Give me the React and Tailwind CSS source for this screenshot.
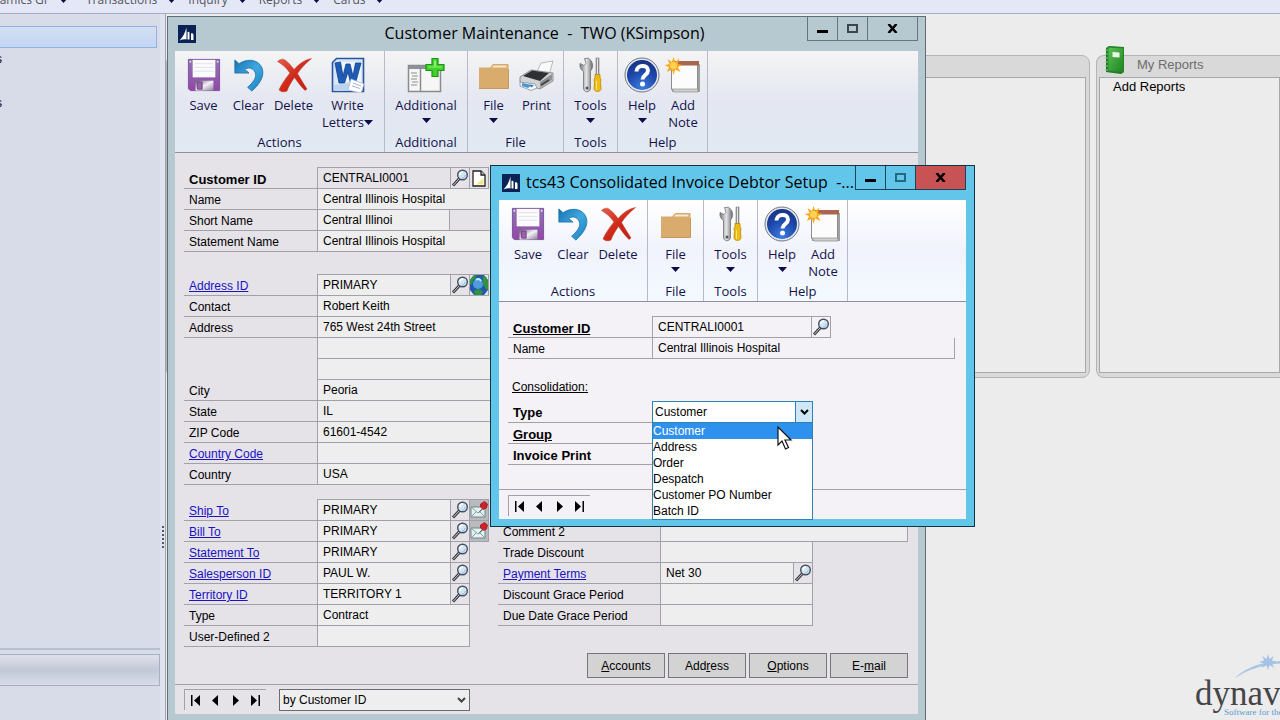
import { useState } from 'react'

const sans = "font-['Liberation_Sans',Arial,sans-serif]"
const ui = "font-['Open_Sans','Noto_Sans',sans-serif]"

function Gradients() {
  return (
    <svg width="0" height="0" className="absolute" aria-hidden="true">
      <defs>
        <linearGradient id="purple" x1="0" y1="0" x2="0" y2="1">
          <stop offset="0" stopColor="#8d76b4" />
          <stop offset="1" stopColor="#9446a8" />
        </linearGradient>
        <linearGradient id="metal" x1="0" y1="0" x2="1" y2="1">
          <stop offset="0" stopColor="#6b6178" />
          <stop offset="0.5" stopColor="#f2f2f6" />
          <stop offset="1" stopColor="#8b8298" />
        </linearGradient>
        <linearGradient id="blueArrow" x1="0" y1="0" x2="1" y2="1">
          <stop offset="0" stopColor="#1672b4" />
          <stop offset="0.5" stopColor="#3fa9de" />
          <stop offset="1" stopColor="#1b7dc0" />
        </linearGradient>
        <linearGradient id="red" x1="0" y1="0" x2="1" y2="1">
          <stop offset="0" stopColor="#e2604c" />
          <stop offset="0.5" stopColor="#cf2a1a" />
          <stop offset="1" stopColor="#b81d12" />
        </linearGradient>
        <radialGradient id="helpBlue" cx="0.5" cy="0.9" r="0.9">
          <stop offset="0" stopColor="#3b7be0" />
          <stop offset="0.6" stopColor="#1d45a8" />
          <stop offset="1" stopColor="#173384" />
        </radialGradient>
        <linearGradient id="steel" x1="0" y1="0" x2="1" y2="0">
          <stop offset="0" stopColor="#77777c" />
          <stop offset="0.5" stopColor="#e6e6e8" />
          <stop offset="1" stopColor="#6a6a6e" />
        </linearGradient>
        <linearGradient id="book" x1="0" y1="0" x2="1" y2="1">
          <stop offset="0" stopColor="#5cc455" />
          <stop offset="1" stopColor="#1d8221" />
        </linearGradient>
      </defs>
    </svg>
  )
}

function SaveIcon() {
  return (
    <svg width="34" height="34" viewBox="0 0 36 36">
      <path d="M1.500 1.500h33v33h-31l-2-2z" fill="url(#purple)" stroke="#7d4f97" />
      <path d="M6 2h24v18.500H6z" fill="#fbfbfd" />
      <path d="M8 6h20M8 10h20M8 14h20" stroke="#dfe2ea" />
      <circle cx="3.500" cy="4" r="1" fill="#e9e0f2" />
      <circle cx="32.500" cy="4" r="1" fill="#e9e0f2" />
      <path d="M9 24h19v10.500H9z" fill="url(#metal)" />
      <path d="M11 25.500h5v7.500h-5z" fill="#a25cb8" stroke="#64486f" />
    </svg>
  )
}

function ClearIcon() {
  return (
    <svg width="34" height="36" viewBox="0 0 36 36">
      <path
        d="M3 2l4.500 4C15 1 25 1 30 7.500c6 8 1.500 18.500-9 27.500l-4.500-4c7-6 11-12 7-17.500-2.500-3.500-7-3.500-10-1.500l4.500 4H3z"
        fill="url(#blueArrow)"
        stroke="#176aa6"
        strokeWidth="0.800"
      />
    </svg>
  )
}

function DeleteIcon() {
  return (
    <svg width="38" height="36" viewBox="0 0 38 36">
      <path
        d="M2.500 4.500C5 2 8 1.500 10 3c4 3 6.500 6 9 9.500C24 7 29 3 36.500 1.500 31 6 26.500 10.500 22.500 16.500c3 5 6 10 9.500 15.500l-2 1.500c-4-4-7.500-8.500-10.500-13-3.500 5-6 9-7.500 13.500-3 1.500-5.500 1-8-1 2-5 6-11 11-17C11.500 11 7 7 2.500 4.500z"
        fill="url(#red)"
        stroke="#c43a2b"
        strokeWidth="0.500"
      />
    </svg>
  )
}

function WordIcon() {
  return (
    <svg width="36" height="36" viewBox="0 0 36 36">
      <path d="M6.500 1.500h27v33h-31v-29z" fill="#d6e7f8" stroke="#28549c" strokeWidth="1.600" />
      <path d="M7 5h24v20H7z" fill="#eef6fd" />
      <path d="M5 6l5.500-1 2.500 14 3-12h4l3 12 2.500-13H31l-5.500 20h-5L18 15l-3.500 11H9z" fill="#1f5cb5" stroke="#123f8b" strokeWidth="0.800" />
      <path d="M4 28l16-2v8H4z" fill="#bcd4ee" />
      <path d="M21 22l13 5-3 9-13-3z" fill="#fff" stroke="#a9b8cc" strokeWidth="0.700" />
      <path d="M23 26l8 3M22 29l8 2.500" stroke="#9db5d4" />
    </svg>
  )
}

function AdditionalIcon() {
  return (
    <svg width="38" height="36" viewBox="0 0 38 36">
      <path d="M1.500 8.500h32v26h-32z" fill="#f6f6f6" stroke="#8b8b8b" strokeWidth="1.500" />
      <path d="M2 9h31v3H2z" fill="#8d909b" />
      <path d="M13.500 12v22" stroke="#8b8b8b" strokeWidth="1.500" />
      <path d="M4 16h6M5 19h6M4 22h6M5 25h6M4 28h6" stroke="#8d8d8d" />
      <path d="M25 1.500h6v6h6v6h-6v6h-6v-6h-6v-6h6z" fill="#42d02b" stroke="#1d9418" strokeWidth="1.200" />
      <path d="M27 3.500h2v6h6v1H21v-1h6z" fill="#8cf072" />
    </svg>
  )
}

function FileIcon() {
  return (
    <svg width="36" height="36" viewBox="0 0 36 36">
      <path d="M3 10.500h11l3-3.500h15.500v24.500H3z" fill="#d9ab6c" />
      <path d="M17.500 8.500h13v2h-14.500z" fill="#f5e9d4" />
      <path d="M3 31.500h29.500V12" stroke="#c6985a" fill="none" />
    </svg>
  )
}

function PrintIcon() {
  return (
    <svg width="38" height="36" viewBox="0 0 38 36">
      <path d="M19 15l4-9 12-2-4 14z" fill="#fafafa" stroke="#a8a8a8" strokeWidth="0.800" />
      <path d="M2 20l11-7 22 3v8l-13 8-20-7z" fill="#d1d2d4" stroke="#77787a" strokeWidth="0.800" />
      <path d="M5 19l9-5.500 17 2.500-9 8z" fill="#2e3033" />
      <path d="M22 25l12-8v6l-12 8z" fill="#8e9092" />
      <path d="M23 28l8-5" stroke="#434446" strokeWidth="1.500" />
      <path d="M2 25l15 2 2 4-6 2.500L2 29z" fill="#f4f8fb" stroke="#8b9094" strokeWidth="0.800" />
      <path d="M4 26l10 2-4 3-6-2z" fill="#4398d4" />
      <path d="M12 27.500l4 1-3 2z" fill="#3b68b8" />
    </svg>
  )
}

function ToolsIcon() {
  return (
    <svg width="24" height="36" viewBox="0 0 24 36">
      <path
        d="M5.500 1.500l1.500 5-2 2-4-2c-.5 4 1 6.500 3.500 8V31c0 5 7 5 7 0V14c3-3 3-8.500-1-12l-1-.8z"
        fill="url(#steel)"
        stroke="#717175"
        strokeWidth="0.800"
      />
      <circle cx="8" cy="31" r="1.500" fill="#55565a" />
      <path d="M17 1h3v17h-3z" fill="url(#steel)" stroke="#77777b" strokeWidth="0.600" />
      <path d="M16 17.500h5v3l1 2-.5 3 .5 6c0 4-7 4-7 0l.5-6-.5-3 1-2z" fill="#f0bb12" stroke="#b88605" strokeWidth="0.800" />
      <path d="M17.500 24v9" stroke="#ffe678" />
    </svg>
  )
}

function HelpIcon() {
  return (
    <svg width="36" height="36" viewBox="0 0 36 36">
      <circle cx="18" cy="18" r="17" fill="#e4e8f0" stroke="#70757f" />
      <circle cx="18" cy="18" r="15" fill="url(#helpBlue)" />
      <path d="M12.500 14.500c0-7 11.500-7.500 11.500-1 0 4.500-5.500 4.500-5.500 9" fill="none" stroke="#fff" strokeWidth="4" />
      <circle cx="18.500" cy="27" r="2.500" fill="#fff" />
    </svg>
  )
}

function NoteIcon() {
  return (
    <svg width="36" height="36" viewBox="0 0 36 36">
      <path d="M7 7h28v28H7z" fill="#a0a0a0" />
      <path d="M6.500 6.500h26v26h-26z" fill="#fcfcfc" stroke="#8d8d8d" />
      <path d="M7 4h27v4.500H7z" fill="#a7664f" />
      <path d="M9 35l-2-3h26v3z" fill="#cfcfcf" stroke="#8d8d8d" strokeWidth="0.700" />
      <path
        d="M8.500 0l1.700 5 4.300-3.500-1.700 5.500 5 1-5 2 2.700 5-5.300-2.500L8.500 18l-1.500-5.500-5 2.500 2-5-4.500-2 5-1L2.500 2l4.500 3z"
        fill="#f9a91b"
      />
      <circle cx="8.500" cy="8.500" r="3.500" fill="#ffd257" />
    </svg>
  )
}

function Logo() {
  return (
    <svg width="18" height="18" viewBox="0 0 18 18" className="shrink-0">
      <path d="M0 0h18v18H0z" fill="#0b2257" />
      <path d="M1.500 15.500C5 12 7 8 8.500 2.500v12c-2-.5-4.500 0-7 1z" fill="#fff" />
      <path d="M9.500 7c1.500-.8 2 0 2 1.500v6h-2zM13 8.500c1.500-.8 2.500 0 2.500 1.500v5H13z" fill="#fff" />
    </svg>
  )
}

function LookupIcon() {
  return (
    <svg width="18" height="18" viewBox="0 0 18 18">
      <path d="M8.500 9.500l-6.500 7" stroke="#3a3a42" strokeWidth="3" />
      <path d="M8 10l-5.500 6" stroke="#c9ccd4" />
      <circle cx="11.500" cy="6" r="4.800" fill="#cfe6f8" stroke="#4a4c58" strokeWidth="1.400" />
      <path d="M9 6c0-2 1-3 3-3" stroke="#fff" strokeWidth="1.500" fill="none" />
      <path d="M14 6c0 2-1 3-3 3" stroke="#8dbbe2" fill="none" />
    </svg>
  )
}

function PageIcon() {
  return (
    <svg width="18" height="18" viewBox="0 0 18 18">
      <path d="M3 2h8l4 4v11H3z" fill="#fff" stroke="#222" strokeWidth="1.300" />
      <path d="M11 2v4h4" fill="#ccc" stroke="#222" strokeWidth="1.300" />
      <path d="M13.500 9v6.500H6z" fill="#eeea86" />
    </svg>
  )
}

function GlobeIcon() {
  return (
    <svg width="18" height="20" viewBox="0 0 18 20">
      <path d="M4 0h10l4 5v10l-4 5H4l-4-5V5z" fill="#2458ae" />
      <circle cx="8" cy="9" r="5" fill="#4f9be0" />
      <path d="M0 5c2-3 3-5 6-5 1 3-2 4-3 6s-1 3-3 4zM12 1l4 1 2 4v8l-2 1c0-3-2-3-3-6s1-5-1-8zM4 16c3-3 7-2 9 1l-2 3H5z" fill="#2f9340" />
      <path d="M6 5c2-2 4-1 5 1" stroke="#c3ecf8" strokeWidth="2" fill="none" />
    </svg>
  )
}

function MailIcon() {
  return (
    <svg width="18" height="18" viewBox="0 0 18 18">
      <path d="M1 6h14v10H1z" fill="#e4f1f1" stroke="#6f8587" />
      <path d="M1 6l7 6 7-6M1 16l5-5M15 16l-5-5" fill="none" stroke="#7fa3a5" />
      <path d="M10.500 3l4-2.500L17.500 3l-1 4-3 1.500-3-2.500z" fill="#d0212b" stroke="#8e1017" strokeWidth="0.700" />
      <path d="M12 8l-3 3.500" stroke="#555" />
    </svg>
  )
}

const rowIcons = { lookup: LookupIcon, page: PageIcon, globe: GlobeIcon, mail: MailIcon }

function RowButton({ kind, first }) {
  const Icon = rowIcons[kind]
  return (
    <button
      aria-label={kind}
      className={`flex w-[19px] shrink-0 items-center justify-center overflow-hidden border-r border-[#a2a0a8] ${first ? 'border-t' : ''} ${kind === 'mail' ? 'bg-[#b9b9be]' : ''}`}
    >
      <Icon />
    </button>
  )
}

function Caption({ id, text, link, bold, underline }) {
  if (link) return <a href="#lookup" className="text-[#1a12c4] underline">{text}</a>
  return (
    <label htmlFor={id} className={`${bold ? 'text-[13px] font-bold' : ''} ${underline ? 'underline' : ''}`}>
      {text}
    </label>
  )
}

function Row({ id, label, link, bold, underline, value = '', buttons = [], first, labelWidth, width = 'w-full', fill = 'bg-[#eeeeee]', tail, open }) {
  // blank captions continue the field above, so they carry no rule under the label
  const rule = label ? 'border-b border-[#a2a0a8]' : ''
  return (
    <div className={`flex ${first ? 'h-[22px]' : 'h-[21px]'} ${width}`}>
      <div className={`flex shrink-0 items-end pl-[5px] leading-[17px] ${rule} ${labelWidth}`}>
        <Caption id={id} text={label} link={link} bold={bold} underline={underline} />
      </div>
      <div className="flex min-w-0 flex-1 border-b border-[#a2a0a8]">
        <input
          id={id}
          aria-label={label || 'Address line'}
          defaultValue={value}
          className={`min-w-0 flex-1 border-l border-[#a2a0a8] pl-[5px] outline-none ${open ? '' : 'border-r'} ${first ? 'border-t' : ''} ${fill}`}
        />
        {buttons.map(kind => <RowButton key={kind} kind={kind} first={first} />)}
        {tail && <div className="w-10 shrink-0" />}
      </div>
    </div>
  )
}

const iconMap = {
  Save: SaveIcon, Clear: ClearIcon, Delete: DeleteIcon, 'Write Letters': WordIcon, Additional: AdditionalIcon,
  File: FileIcon, Print: PrintIcon, Tools: ToolsIcon, Help: HelpIcon, 'Add Note': NoteIcon,
}

function Arrow() {
  return (
    <svg width="9" height="5" viewBox="0 0 9 5" className="inline-block shrink-0">
      <path d="M0 0h9L4.500 5z" fill="#0d0b4a" />
    </svg>
  )
}

function RibbonButton({ name, menu, width }) {
  const Icon = iconMap[name]
  const [top, second] = name.split(' ')
  return (
    <button className={`flex flex-col items-center ${width}`}>
      <span className="flex h-9 items-center"><Icon /></span>
      <span className="mt-1 block leading-[17px]">{top}</span>
      <span className={`flex h-[17px] items-center leading-[17px] ${second ? '' : 'pb-1'}`}>
        {second}
        {menu && <Arrow />}
      </span>
    </button>
  )
}

function RibbonGroup({ title, width, children }) {
  return (
    <section className={`flex shrink-0 flex-col border-r border-[#b7bac8] ${width}`}>
      <div className="flex flex-1 justify-center pt-1.5">{children}</div>
      <div className="pb-px text-center leading-[18px]">{title}</div>
    </section>
  )
}

function Ribbon({ className, children }) {
  return (
    <div className={`flex h-[102px] border-b border-[#8d909c] text-[13px] text-[#14124a] ${ui} ${className}`}>
      {children}
    </div>
  )
}

function TitleBar({ title, active }) {
  const edge = active ? 'border-[#1d4252]' : 'border-[#66757c]'
  return (
    <header className={`flex h-[34px] ${ui}`}>
      <div className="flex min-w-0 flex-1 items-center gap-1.5 pl-[3px]">
        <Logo />
        <h2 className={`min-w-0 flex-1 overflow-hidden whitespace-pre text-[16px] text-black ${active ? '' : 'pl-[90px] text-center'}`}>
          {title}
        </h2>
      </div>
      <div className={`flex h-6 shrink-0 border-b border-l ${edge} ${active ? 'ml-0' : 'ml-[10px]'}`}>
        <button aria-label="Minimize" className={`flex w-[30px] items-center justify-center border-r ${edge}`}>
          <span className="mt-1.5 h-[3px] w-[11px] bg-black" />
        </button>
        <button aria-label="Maximize" className={`flex w-[30px] items-center justify-center border-r ${edge}`}>
          <span className={`h-[9px] w-[11px] border-2 ${active ? 'border-[#24697f]' : 'border-[#3c474c]'}`} />
        </button>
        <button aria-label="Close" className={`flex w-[50px] items-center justify-center border-r ${edge} ${active ? 'bg-[#c75355]' : ''}`}>
          <svg width="11" height="9" viewBox="0 0 11 9">
            <path d="M1.500 0l8 9M9.500 0l-8 9" stroke="#000" strokeWidth="2.500" />
          </svg>
        </button>
      </div>
    </header>
  )
}

const navSteps = [
  ['First record', 'M1 0h1.500v11H1zM10 0v11L4 5.500z'],
  ['Previous record', 'M8 0v11L2 5.500z'],
  ['Next record', 'M3 0v11l6-5.500z'],
  ['Last record', 'M1 0v11l6-5.500zM8.500 0H10v11H8.500z'],
]

function RecordNav() {
  return (
    <nav className="flex h-[21px] w-[82px] shrink-0 border-l border-t border-[#a2a0a8]">
      {navSteps.map(([name, d]) => (
        <button key={name} aria-label={name} className="flex flex-1 items-center justify-center">
          <svg width="11" height="11" viewBox="0 0 11 11"><path d={d} fill="#000" /></svg>
        </button>
      ))}
    </nav>
  )
}

const menus = ['Transactions', 'Inquiry', 'Reports', 'Cards']
const nameRows = [
  { label: 'Customer ID', value: 'CENTRALI0001', bold: true, first: true, buttons: ['lookup', 'page'], fill: 'bg-[#e5e2e8]', width: 'w-[305px]' },
  { label: 'Name', value: 'Central Illinois Hospital', open: true },
  { label: 'Short Name', value: 'Central Illinoi', tail: true },
  { label: 'Statement Name', value: 'Central Illinois Hospital', open: true },
]
const addressRows = [
  { label: 'Address ID', value: 'PRIMARY', link: true, first: true, buttons: ['lookup', 'globe'], width: 'w-[305px]' },
  { label: 'Contact', value: 'Robert Keith', open: true },
  { label: 'Address', value: '765 West 24th Street', open: true },
  { label: '', open: true },
  { label: '', open: true },
  { label: 'City', value: 'Peoria', open: true },
  { label: 'State', value: 'IL', open: true },
  { label: 'ZIP Code', value: '61601-4542', open: true },
  { label: 'Country Code', link: true, open: true },
  { label: 'Country', value: 'USA', open: true },
]
const wide = 'w-[305px]'
const short = 'w-[286px]'
const billingRows = [
  { label: 'Ship To', value: 'PRIMARY', link: true, first: true, buttons: ['lookup', 'mail'], width: wide },
  { label: 'Bill To', value: 'PRIMARY', link: true, buttons: ['lookup', 'mail'], width: wide },
  { label: 'Statement To', value: 'PRIMARY', link: true, buttons: ['lookup'], width: short },
  { label: 'Salesperson ID', value: 'PAUL W.', link: true, buttons: ['lookup'], width: short },
  { label: 'Territory ID', value: 'TERRITORY 1', link: true, buttons: ['lookup'], width: short },
  { label: 'Type', value: 'Contract', width: short },
  { label: 'User-Defined 2', width: short },
]
const termsRows = [
  { label: 'Comment 2', width: 'w-[410px]', first: true },
  { label: 'Trade Discount' },
  { label: 'Payment Terms', value: 'Net 30', link: true, buttons: ['lookup'] },
  { label: 'Discount Grace Period' },
  { label: 'Due Date Grace Period' },
]

function Rows({ rows, prefix, labelWidth, width }) {
  return rows.map((row, i) => (
    <Row key={i} id={`${prefix}-${i}`} labelWidth={labelWidth} width={width} {...row} />
  ))
}

function CustomerWindow() {
  return (
    <section className={`absolute left-[167px] top-4 w-[759px] border border-[#5f6e76] bg-[#b6c8d0] px-[7px] pb-2 text-xs text-black ${sans}`}>
      <TitleBar title={'Customer Maintenance  -  TWO (KSimpson)'} />
      <Ribbon className="bg-linear-to-b from-[#f4f4f5] via-[#e4e7f1] to-[#e1e9f3]">
        <RibbonGroup title="Actions" width="w-[210px]">
          <RibbonButton name="Save" width="w-[46px]" />
          <RibbonButton name="Clear" width="w-[44px]" />
          <RibbonButton name="Delete" width="w-[46px]" />
          <RibbonButton name="Write Letters" menu width="w-[62px]" />
        </RibbonGroup>
        <RibbonGroup title="Additional" width="w-[83px]">
          <RibbonButton name="Additional" menu width="w-[70px]" />
        </RibbonGroup>
        <RibbonGroup title="File" width="w-24">
          <RibbonButton name="File" menu width="w-[42px]" />
          <RibbonButton name="Print" width="w-[44px]" />
        </RibbonGroup>
        <RibbonGroup title="Tools" width="w-[54px]">
          <RibbonButton name="Tools" menu width="w-[45px]" />
        </RibbonGroup>
        <RibbonGroup title="Help" width="w-[90px]">
          <RibbonButton name="Help" menu width="w-[41px]" />
          <RibbonButton name="Add Note" width="w-[41px]" />
        </RibbonGroup>
      </Ribbon>
      <div className="bg-[#e5e2e8]">
        <div className="flex gap-2 pl-[9px] pr-[9px] pt-[14px]">
          <form className="w-[306px] shrink-0">
            <div><Rows rows={nameRows} prefix="name" labelWidth="w-[133px]" /></div>
            <div className="mt-[22px]"><Rows rows={addressRows} prefix="addr" labelWidth="w-[133px]" /></div>
            <div className="mt-[14px]"><Rows rows={billingRows} prefix="bill" labelWidth="w-[133px]" /></div>
          </form>
          <form className="mb-[21px] flex-1 self-end">
            <Rows rows={termsRows} prefix="terms" labelWidth="w-[162px]" width="w-[315px]" />
          </form>
        </div>
        <div className="flex justify-end gap-[3px] border-b border-[#a2a0a8] px-[10px] py-1.5">
          {['Accounts', 'Address', 'Options', 'E-mail'].map(name => {
            const key = { Accounts: 0, Address: 3, Options: 0, 'E-mail': 2 }[name]
            return (
              <button key={name} className="h-[25px] w-[78px] border border-[#77767c] bg-[#d3d3d4]">
                {name.slice(0, key)}<u>{name[key]}</u>{name.slice(key + 1)}
              </button>
            )
          })}
        </div>
        <footer className="flex gap-[13px] px-[9px] pb-[3px] pt-1">
          <RecordNav />
          <div className="relative w-[191px]">
            <select aria-label="Sort order" className="h-[22px] w-full appearance-none border border-[#6c6b72] bg-[#eeeeee] pl-[3px]">
              <option>by Customer ID</option>
            </select>
            <svg width="9" height="6" viewBox="0 0 9 6" className="pointer-events-none absolute right-1 top-2">
              <path d="M1 1l3.500 3.500L8 1" fill="none" stroke="#444" strokeWidth="2" />
            </svg>
          </div>
        </footer>
      </div>
    </section>
  )
}

const types = ['Customer', 'Address', 'Order', 'Despatch', 'Customer PO Number', 'Batch ID']

function TypePicker() {
  const [type, setType] = useState('Customer')
  return (
    <div className="relative w-[161px] self-start">
      <select
        id="type"
        value={type}
        onChange={e => setType(e.target.value)}
        className="block h-[22px] w-full appearance-none border border-[#2f82b4] bg-white pl-[2px]"
      >
        {types.map(t => <option key={t}>{t}</option>)}
      </select>
      <span className="pointer-events-none absolute right-px top-px flex h-5 w-[17px] items-center justify-center border-l border-[#2f82b4] bg-[#cfe8f8]">
        <svg width="9" height="6" viewBox="0 0 9 6"><path d="M1 1l3.500 3.500L8 1" fill="none" stroke="#000" strokeWidth="2" /></svg>
      </span>
      <ul role="listbox" aria-label="Type" className="absolute left-0 top-full w-full border-x border-b border-[#2f82b4] bg-white">
        {types.map(t => (
          <li
            key={t}
            role="option"
            aria-selected={t === type}
            onClick={() => setType(t)}
            className={`h-4 leading-4 ${t === type ? 'bg-[#2f91ee] text-white' : ''}`}
          >
            {t}
          </li>
        ))}
      </ul>
    </div>
  )
}

function DebtorWindow() {
  return (
    <section className={`absolute left-[490px] top-[165px] w-[485px] border border-[#123542] bg-[#62c6ea] px-2 pb-[7px] text-xs text-black ${sans}`}>
      <TitleBar active title="tcs43 Consolidated Invoice Debtor Setup  -..." />
      <Ribbon className="bg-linear-to-b from-white via-[#f1f3fc] to-[#f3faff]">
        <RibbonGroup title="Actions" width="w-[149px]">
          <RibbonButton name="Save" width="w-[45px]" />
          <RibbonButton name="Clear" width="w-[45px]" />
          <RibbonButton name="Delete" width="w-[45px]" />
        </RibbonGroup>
        <RibbonGroup title="File" width="w-14">
          <RibbonButton name="File" menu width="w-[45px]" />
        </RibbonGroup>
        <RibbonGroup title="Tools" width="w-[54px]">
          <RibbonButton name="Tools" menu width="w-[45px]" />
        </RibbonGroup>
        <RibbonGroup title="Help" width="w-[90px]">
          <RibbonButton name="Help" menu width="w-[41px]" />
          <RibbonButton name="Add Note" width="w-[41px]" />
        </RibbonGroup>
      </Ribbon>
      <form className="bg-[#f4f1f7]">
        <div className="px-[9px] pt-[14px]">
          <Row id="debtor" label="Customer ID" bold underline first value="CENTRALI0001" buttons={['lookup']} labelWidth="w-[144px]" width="w-[323px]" fill="bg-[#f4f1f7]" />
          <div className="w-[447px]">
            <Row id="debtor-name" label="Name" value="Central Illinois Hospital" labelWidth="w-[144px]" fill="bg-[#f4f1f7]" />
          </div>
          <p className="mt-5 pl-1 leading-[17px] underline">Consolidation:</p>
          <div className="mt-[5px] flex">
            <div className="w-[144px] text-[13px] font-bold">
              <label htmlFor="type" className="block h-[22px] border-b border-[#a2a0a8] pl-[5px] pt-[3px] leading-[17px]">Type</label>
              <div className="h-[21px] border-b border-[#a2a0a8] pl-[5px] pt-[3px] leading-[17px] underline">Group</div>
              <div className="h-[21px] border-b border-[#a2a0a8] pl-[5px] pt-[3px] leading-[17px]">Invoice Print</div>
            </div>
            <TypePicker />
          </div>
        </div>
        <div className="mt-6 border-t border-[#a2a0a8] px-[9px] pb-[3px] pt-[5px]">
          <RecordNav />
        </div>
      </form>
    </section>
  )
}

function Cursor() {
  return (
    <svg width="16" height="24" viewBox="0 0 16 24" className="absolute left-[777px] top-[426px]">
      <path d="M1 1v18l4-4 3.500 8 3-1.500L8 14h6z" fill="#fff" stroke="#111" strokeWidth="1.200" />
    </svg>
  )
}

function HomePanel({ title, className, children }) {
  return (
    <section className={`flex h-[323px] flex-col border border-[#b4b4b4] bg-[#d9d9d9] pb-1 ${className}`}>
      <h3 className="h-[21px] shrink-0 pl-[38px] text-[13px] leading-[18px] text-[#6d6d6d]">{title}</h3>
      <div className="flex-1 border border-[#a8a8a8] bg-[#ececec] pl-[13px]">{children}</div>
    </section>
  )
}

function Brand() {
  return (
    <div className="absolute bottom-0 right-0 h-[68px] w-[85px] overflow-hidden font-['Liberation_Serif','Times_New_Roman',serif]">
      <svg width="48" height="30" viewBox="0 0 48 30" className="absolute right-0 top-0">
        <path d="M3 26Q18 11 48 9v2.500Q20 14 3 26z" fill="#a9c6e6" />
        <path d="M36 2l1.500 5 4-3-1.500 4.500 5 1.500-5 1.500 2 4.500-4.500-3L36 18l-1.500-5-4.500 3 2-4.500-5-1.500 5-1.500L30.500 4l4 3z" fill="#a3c2e4" />
      </svg>
      <div className="absolute left-0 top-[22px] whitespace-nowrap text-[35px] leading-10 text-[#454548]">dynav</div>
      <div className="absolute left-[29px] top-[54px] whitespace-nowrap text-[9px] leading-3 text-[#5a9bd0]">Software for the</div>
    </div>
  )
}

export default function App() {
  return (
    <div className={`relative flex h-screen flex-col overflow-hidden bg-[#ececec] text-xs text-black ${sans}`}>
      <Gradients />
      <header className={`flex h-[14px] shrink-0 items-end border-b border-[#a5acc6] bg-[#e4e8f6] pb-[5px] text-[#55565e] ${ui}`}>
        <button className="flex w-[68px] items-center justify-end gap-2 whitespace-nowrap leading-4">Dynamics GP <Arrow /></button>
        <div className="flex gap-3 pl-[18px]">
          {menus.map(m => (
            <button key={m} className="flex items-center gap-2.5 leading-4">{m} <Arrow /></button>
          ))}
        </div>
      </header>
      <div className="flex min-h-0 flex-1">
        <aside className="flex w-40 shrink-0 flex-col bg-[#d8dce9] pt-3">
          <div className="mr-[3px] h-[22px] border border-l-0 border-[#93b4e0] bg-linear-to-b from-[#d3e0f4] to-[#c2d5f2]" />
          <ul className="-ml-1 flex flex-col gap-7 pt-[3px] leading-4">
            <li>s</li>
            <li>s</li>
          </ul>
          <div className="mb-[34px] mt-auto border-t-2 border-[#b9c0d4] pt-1">
            <div className="h-8 border border-l-0 border-[#a8afc4] bg-linear-to-b from-[#dfe1ea] via-[#c3c8d8] to-[#d8dce8]" />
          </div>
        </aside>
        <div className="flex w-1.5 shrink-0 flex-col items-center justify-center gap-[2px] border-r border-[#a3a3ab] bg-[#dfe3f0] pt-[340px]">
          {[0, 1, 2, 3, 4, 5].map(i => <span key={i} className="h-[2px] w-[2px] bg-[#555a66]" />)}
        </div>
        <main className="flex flex-1 gap-1.5 pt-[41px]">
          <HomePanel title="" className="flex-1 rounded-lg px-[3px]" />
          <HomePanel title="My Reports" className="relative w-[184px] rounded-l-lg border-r-0 pl-[2px]">
            <svg width="22" height="30" viewBox="0 0 22 30" className="absolute left-[7px] top-[-11px]">
              <path d="M2 3l3-2 15 1v25l-3 2-15-2z" fill="#1c7a20" />
              <path d="M4 2l15.500 1v24L4 26z" fill="url(#book)" stroke="#248628" />
              <path d="M8.500 7l7 .5v5l-7-.5z" fill="#eaf7e6" />
              <path d="M1 5h3M1 9h3M1 13h3M1 17h3M1 21h3M1 25h3" stroke="#8ac98a" />
            </svg>
            <a href="#reports" className="text-[13px] leading-[18px]">Add Reports</a>
          </HomePanel>
        </main>
      </div>
      <CustomerWindow />
      <DebtorWindow />
      <Cursor />
      <Brand />
    </div>
  )
}
